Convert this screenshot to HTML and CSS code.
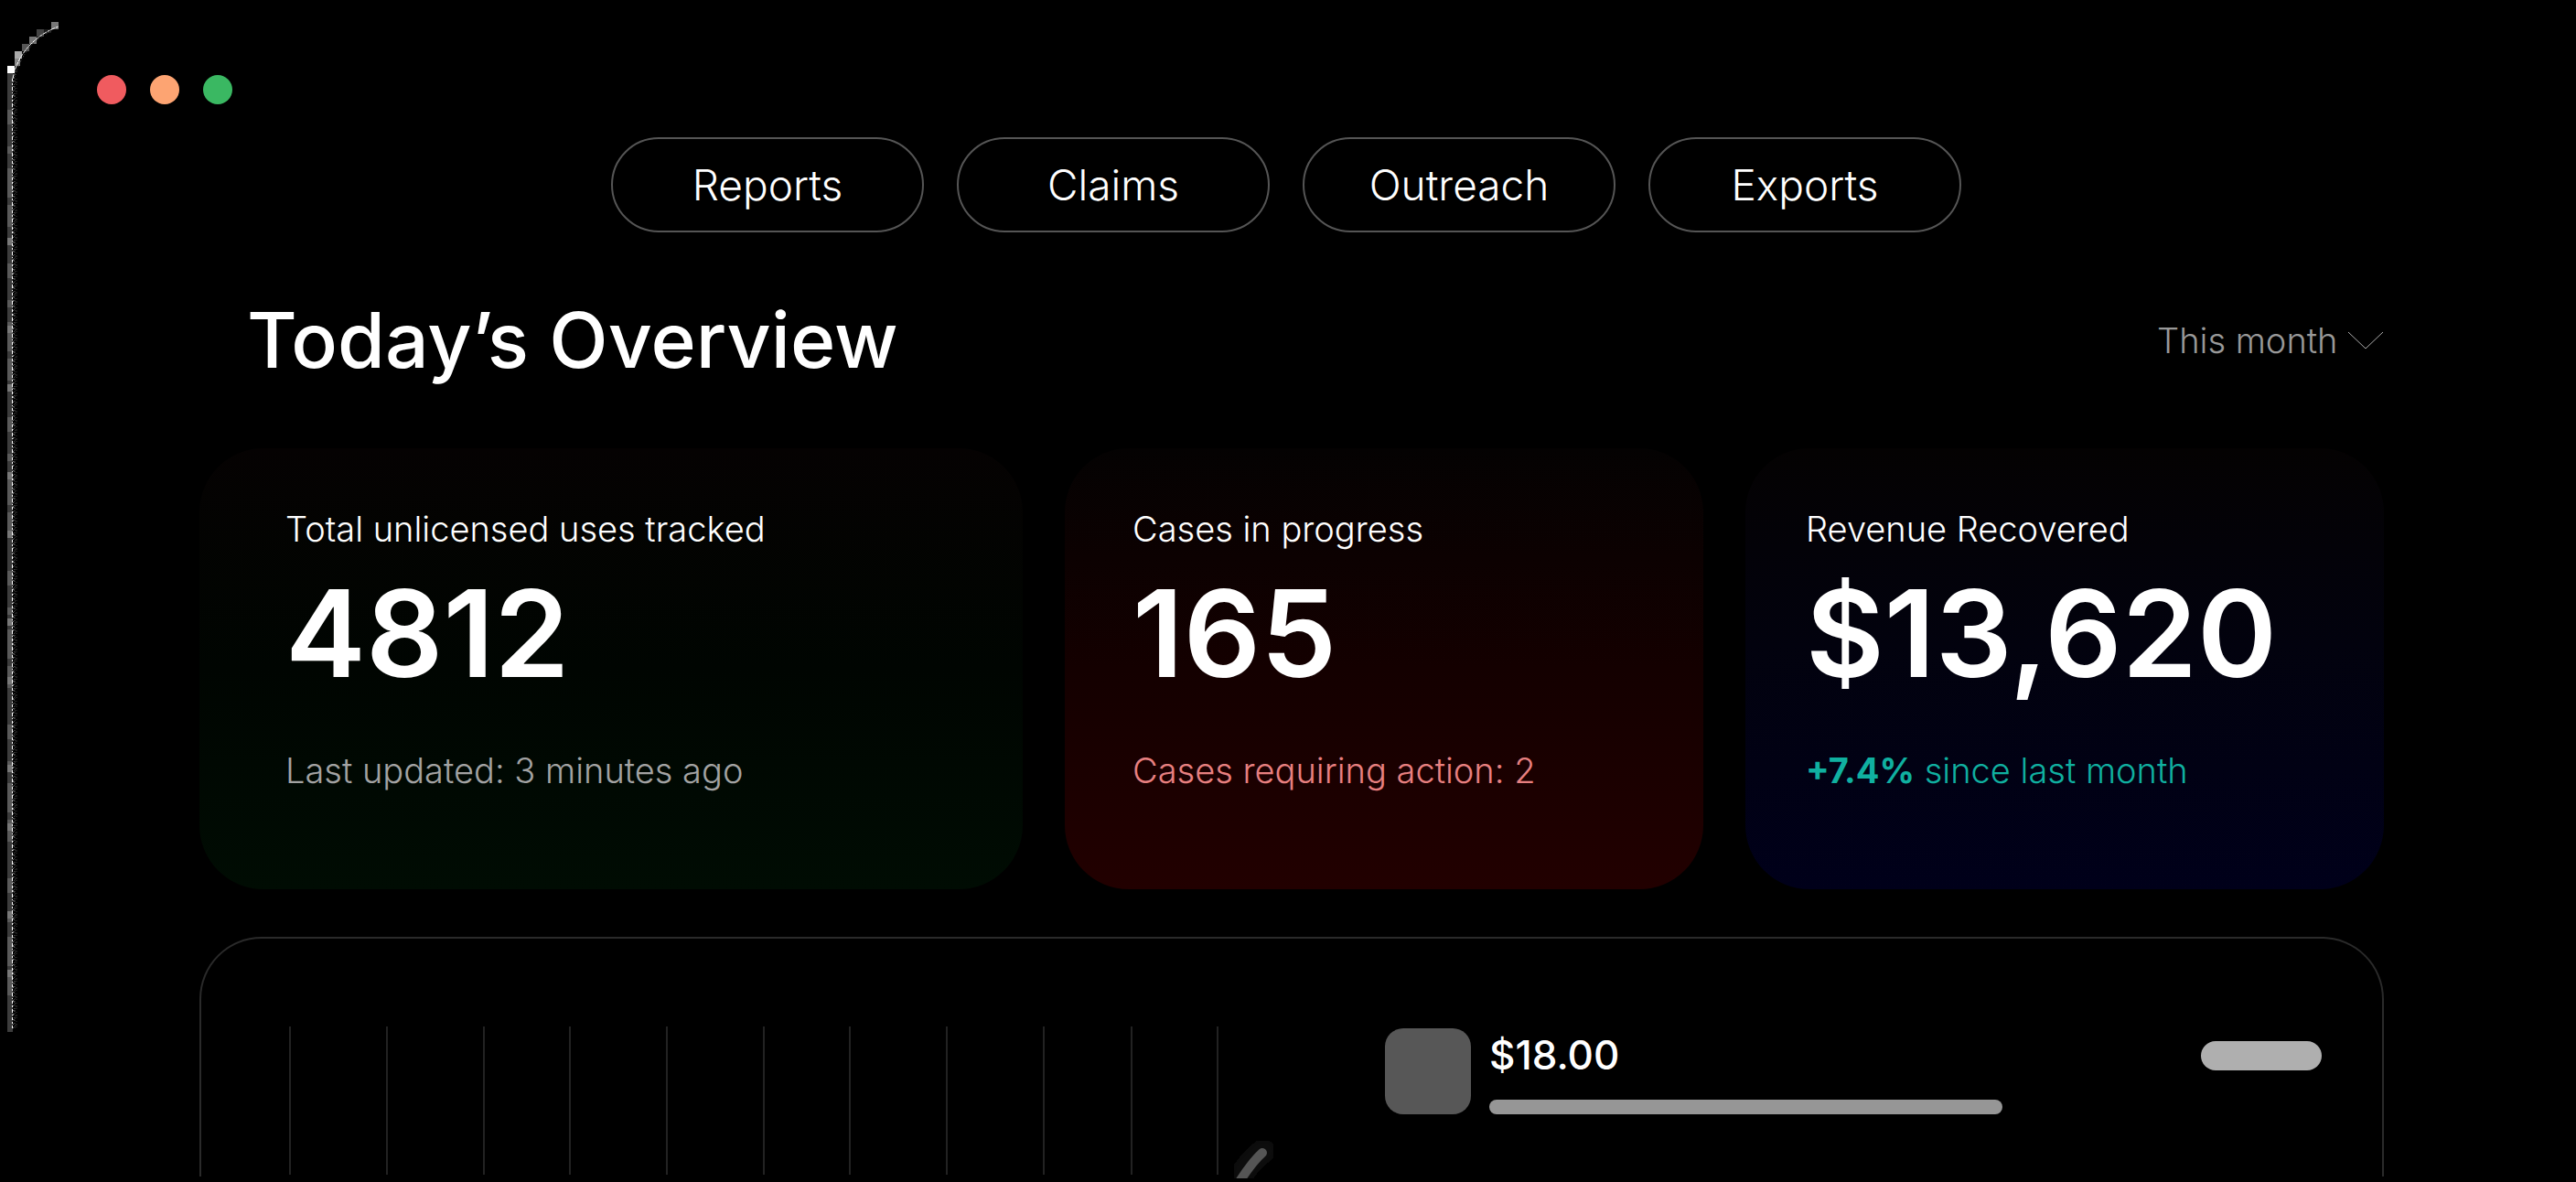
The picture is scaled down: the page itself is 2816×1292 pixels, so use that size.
FILE: index.html
```html
<!DOCTYPE html>
<html lang="en">
<head>
<meta charset="utf-8">
<meta name="viewport" content="width=device-width, initial-scale=1">
<title>Today’s Overview</title>
<link rel="stylesheet" href="styles.css">
</head>
<body>
<div class="window">
  <svg class="window-edge" width="72" height="1140" viewBox="0 0 72 1140" aria-hidden="true">
    <g shape-rendering="crispEdges">
      <path fill="#777" d="M56 24h8v8h-8zM32 40h8v8h-8z"/>
      <path fill="#444" d="M40 32h8v8h-8z"/>
      <path fill="#1c1c1c" d="M48 32h8v4h-8z"/>
      <path fill="#555" d="M24 48h8v8h-8z"/>
      <path fill="#aaa" d="M16 56h8v8h-8z"/>
      <path fill="#888" d="M16 64h6v8h-6z"/>
      <path fill="#fff" d="M8 72h8v8h-8z"/>
      <path stroke="#3c3c3c" stroke-width="6" d="M11 80V1128"/>
      <path stroke="#5a5a5a" stroke-width="6" stroke-dasharray="16 24 8 16 32 8 24 40" d="M11 120V1112"/>
      <path stroke="#777" stroke-width="6" stroke-dasharray="8 88 8 56" d="M11 260V1100"/>
      <path stroke="#fff" stroke-dasharray="3 2 2 2 4 2 1 2" d="M13.500 86V1124"/>
      <path stroke="#777" stroke-dasharray="1 3 2 4 1 4" d="M14.500 84V1124"/>
      <path stroke="#444" stroke-dasharray="1 1 2 2 1 3" d="M15.500 82V1124"/>
      <path stroke="#2a2a2a" stroke-dasharray="2 1 1 2 1 1" d="M16.500 80V1124"/>
      <path stroke="#1c1c1c" stroke-width="2" stroke-dasharray="1 2 2 1 1 3" d="M18 86V1124"/>
    </g>
    <path fill="none" stroke="#fff" stroke-dasharray="5 1 3 1" d="M14 86C18 62 36 39 64 29"/>
    <path fill="none" stroke="#444" stroke-dasharray="1 2 2 1" d="M17 82C22 62 36 43 56 34"/>
  </svg>

  <div class="dots" aria-hidden="true">
    <span class="dot dot-close"></span>
    <span class="dot dot-minimise"></span>
    <span class="dot dot-expand"></span>
  </div>

  <nav class="tabs">
    <button class="tab" type="button">Reports</button>
    <button class="tab" type="button">Claims</button>
    <button class="tab" type="button">Outreach</button>
    <button class="tab" type="button">Exports</button>
  </nav>

  <main class="content">
    <header class="heading">
      <h1 class="title">Today’s Overview</h1>
      <div class="period">
        <select class="period-select" aria-label="Period">
          <option>This month</option>
        </select>
        <svg class="chevron" width="40" height="20" viewBox="0 0 40 20" aria-hidden="true"><path d="M1 1L20 19L39 1"/></svg>
      </div>
    </header>

    <section class="cards">
      <article class="card card-uses">
        <h2 class="card-label">Total unlicensed uses tracked</h2>
        <p class="card-value">4812</p>
        <p class="card-note">Last updated: 3 minutes ago</p>
      </article>
      <article class="card card-cases">
        <h2 class="card-label">Cases in progress</h2>
        <p class="card-value">165</p>
        <p class="card-note">Cases requiring action: 2</p>
      </article>
      <article class="card card-revenue">
        <h2 class="card-label">Revenue Recovered</h2>
        <p class="card-value">$13,620</p>
        <p class="card-note"><strong>+7.4%</strong> since last month</p>
      </article>
    </section>

    <section class="panel">
      <svg class="chart" width="1100" height="166" viewBox="0 0 1100 166" aria-hidden="true">
        <defs>
          <filter id="glow" x="-50%" y="-50%" width="200%" height="200%"><feGaussianBlur stdDeviation="3"/></filter>
        </defs>
        <path class="gridlines" d="M1 0V162M107 0V162M213 0V162M307 0V162M413 0V162M519 0V162M613 0V162M719 0V162M825 0V162M921 0V162M1015 0V162"/>
        <path class="trend-glow" filter="url(#glow)" d="M1044 158Q1053 145 1065 136"/>
        <path class="trend" d="M1040 168Q1053 148 1064 138"/>
      </svg>
      <div class="entry">
        <span class="thumb"></span>
        <div class="entry-body">
          <p class="amount">$18.00</p>
          <span class="bar"></span>
        </div>
        <span class="chip"></span>
      </div>
    </section>
  </main>
</div>
</body>
</html>
```
FILE: styles.css
```css
* {
  box-sizing: border-box;
}

body {
  margin: 0;
  background: #000;
  color: #fff;
  font-family: Inter, "Open Sans", sans-serif;
  font-weight: 300;
}

h1,
h2,
p {
  margin: 0;
}

.window {
  position: relative;
  display: flex;
  flex-direction: column;
  min-height: 100vh;
  padding: 82px 0 6px;
}

.window-edge {
  position: absolute;
  top: 0;
  left: 0;
}

.dots {
  display: flex;
  gap: 26px;
  padding-left: 106px;
}

.dot {
  width: 32px;
  height: 32px;
  border-radius: 50%;
}

.dot-close {
  background: #f05b5f;
}

.dot-minimise {
  background: #fda472;
}

.dot-expand {
  background: #3ab862;
}

.tabs {
  display: flex;
  justify-content: center;
  gap: 36px;
  margin-top: 36px;
  padding-right: 4px;
}

.tab {
  width: 342px;
  height: 104px;
  padding: 0;
  border: 2px solid #555;
  border-radius: 52px;
  background: none;
  color: #fff;
  font: inherit;
  font-size: 46px;
}

.content {
  display: flex;
  flex: 1;
  flex-direction: column;
  padding: 68px 210px 0 218px;
}

.heading {
  display: flex;
  align-items: center;
  justify-content: space-between;
  padding-left: 52px;
}

.title {
  font-size: 84px;
  font-weight: 500;
  line-height: 100px;
}

.period {
  display: flex;
  align-items: center;
  gap: 10px;
}

.period-select {
  appearance: none;
  padding: 0;
  border: 0;
  background: none;
  color: #999;
  font: inherit;
  font-size: 38px;
  line-height: 48px;
}

.chevron {
  fill: none;
  stroke: #aaa;
  stroke-width: 1;
}

.cards {
  display: grid;
  grid-template-columns: 900fr 698fr 698fr;
  gap: 46px;
  margin-top: 68px;
}

.card {
  padding: 64px 40px 106px;
  border-radius: 70px;
}

.card-uses {
  padding-left: 94px;
  background: linear-gradient(#050202, #000501 50%, #000c03);
}

.card-cases {
  padding-left: 74px;
  background: linear-gradient(#040202, #140000 50%, #220000);
}

.card-revenue {
  padding-left: 66px;
  background: linear-gradient(#040202, #02020e 45%, #00001a);
}

.card-label,
.card-note {
  font-size: 38px;
  font-weight: 300;
  line-height: 48px;
}

.card-value {
  margin: 18px 0 54px;
  font-size: 132px;
  font-weight: 600;
  line-height: 144px;
}

.card-uses .card-note {
  color: #a3a3a3;
}

.card-cases .card-note {
  color: #e88080;
}

.card-revenue .card-note {
  color: #10b0a0;
}

.card-note strong {
  font-weight: 700;
}

.panel {
  display: flex;
  flex: 1;
  gap: 98px;
  margin-top: 52px;
  padding: 96px 66px 0 96px;
  border: 2px solid #2a2a2a;
  border-bottom: 0;
  border-radius: 68px 68px 0 0;
}

.chart {
  flex: none;
  margin-bottom: -6px;
}

.gridlines {
  fill: none;
  stroke: #222;
  stroke-width: 2;
  shape-rendering: crispEdges;
}

.trend,
.trend-glow {
  fill: none;
  stroke-linecap: round;
}

.trend {
  stroke: #555;
  stroke-width: 10;
}

.trend-glow {
  stroke: #101010;
  stroke-width: 26;
}

.entry {
  display: flex;
  flex: 1;
  align-items: flex-start;
  gap: 20px;
  padding-top: 2px;
}

.thumb {
  width: 94px;
  height: 94px;
  border-radius: 20px;
  background: #575757;
}

.entry-body {
  display: flex;
  flex: 1;
  flex-direction: column;
  gap: 20px;
}

.amount {
  font-size: 44px;
  font-weight: 500;
  line-height: 58px;
}

.bar {
  width: 74%;
  height: 16px;
  border-radius: 8px;
  background: #969696;
}

.chip {
  width: 132px;
  height: 32px;
  margin-top: 14px;
  border-radius: 16px;
  background: #afafaf;
}
```
